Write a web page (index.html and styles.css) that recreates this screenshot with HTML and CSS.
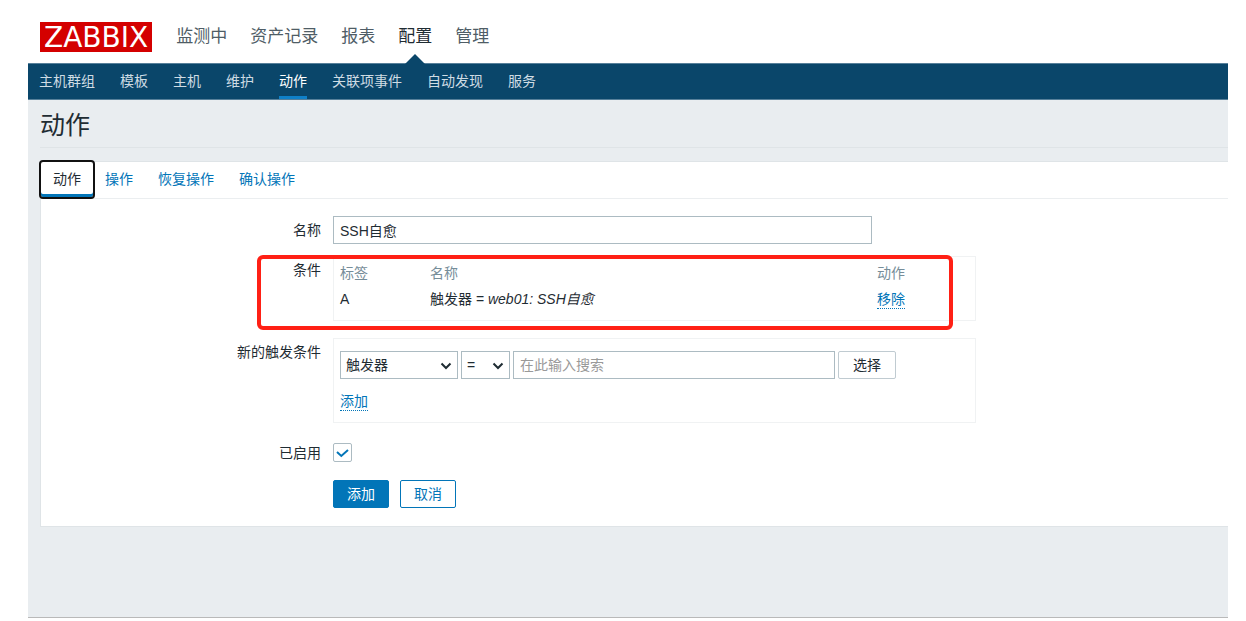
FILE: index.html
```html
<!DOCTYPE html>
<html lang="zh-CN">
<head>
<meta charset="utf-8">
<title>动作</title>
<link rel="stylesheet" href="styles.css">
</head>
<body>
<div class="page">
  <header class="header">
    <a class="logo" href="#">ZABBIX</a>
    <nav class="top-nav">
      <a href="#">监测中</a>
      <a href="#">资产记录</a>
      <a href="#">报表</a>
      <a class="selected" href="#">配置</a>
      <a href="#">管理</a>
    </nav>
  </header>
  <nav class="sub-nav">
    <a href="#">主机群组</a>
    <a href="#">模板</a>
    <a href="#">主机</a>
    <a href="#">维护</a>
    <a class="selected" href="#">动作</a>
    <a href="#">关联项事件</a>
    <a href="#">自动发现</a>
    <a href="#">服务</a>
  </nav>
  <main class="content">
    <h1 class="title">动作</h1>
    <form class="panel">
      <div class="tabs">
        <a class="tab active" href="#">动作</a>
        <a class="tab" href="#">操作</a>
        <a class="tab" href="#">恢复操作</a>
        <a class="tab" href="#">确认操作</a>
      </div>
      <div class="fields">
        <div class="row">
          <label class="label" for="name">名称</label>
          <input class="text-box name-box" id="name" type="text" value="SSH自愈">
        </div>
        <div class="row">
          <span class="label">条件</span>
          <div class="box conditions-box">
            <table class="conditions">
              <thead>
                <tr><th class="col-label">标签</th><th>名称</th><th class="col-action">动作</th></tr>
              </thead>
              <tbody>
                <tr><td>A</td><td>触发器 = <em>web01: SSH自愈</em></td><td><a class="dotted" href="#">移除</a></td></tr>
              </tbody>
            </table>
          </div>
          <div class="highlight"></div>
        </div>
        <div class="row row-new">
          <label class="label" for="type">新的触发条件</label>
          <div class="box new-box">
            <div class="controls">
              <span class="select-wrap type-select">
                <select id="type"><option>触发器</option></select>
                <svg class="chevron" viewBox="0 0 12 8"><path d="M1.500 1.500 6 6l4.500-4.500"/></svg>
              </span>
              <span class="select-wrap operator-select">
                <select aria-label="运算符"><option>=</option></select>
                <svg class="chevron" viewBox="0 0 12 8"><path d="M1.500 1.500 6 6l4.500-4.500"/></svg>
              </span>
              <input class="text-box search-box" type="text" placeholder="在此输入搜索" aria-label="触发器">
              <button class="button button-grey" type="button">选择</button>
            </div>
            <a class="dotted" href="#">添加</a>
          </div>
        </div>
        <div class="row row-enabled">
          <label class="label" for="enabled">已启用</label>
          <span class="check-wrap">
            <input id="enabled" type="checkbox" checked>
            <svg class="tick" viewBox="0 0 14 10"><path d="M1 3 5.300 7 12 1"/></svg>
          </span>
        </div>
        <div class="row row-actions">
          <div class="actions">
            <button class="button button-primary" type="button">添加</button>
            <button class="button" type="button">取消</button>
          </div>
        </div>
      </div>
    </form>
  </main>
</div>
</body>
</html>
```
FILE: styles.css
```css
* {
  box-sizing: border-box;
}

body {
  margin: 0;
  background: #fff;
  color: #1f2c33;
  font: 14px/20px "Liberation Sans", "Noto Sans CJK SC", sans-serif;
}

a {
  color: #0275b8;
  text-decoration: none;
}

input,
select,
button {
  margin: 0;
  color: inherit;
  font: inherit;
}

.page {
  display: flex;
  flex-direction: column;
  min-height: calc(100vh - 3px);
  margin: 0 18px 3px 28px;
}

.header {
  display: flex;
  align-items: center;
  gap: 24px;
  height: 63px;
  padding: 10px 12px 0;
}

.logo {
  padding: 2px 4px 0;
  background: #d40000;
  color: #fff;
  font: 28px/28px "DejaVu Sans", sans-serif;
}

.top-nav {
  display: flex;
  gap: 23px;
  font-size: 17px;
}

.top-nav a {
  position: relative;
  color: #4f5d66;
}

.top-nav .selected {
  color: #1f2c33;
}

.top-nav .selected::after {
  content: "";
  position: absolute;
  top: 27px;
  left: 50%;
  margin-left: -10px;
  border: solid transparent;
  border-width: 0 10px 10px;
  border-bottom-color: #0a466a;
}

.sub-nav {
  display: flex;
  gap: 25px;
  height: 37px;
  padding: 0 11px;
  border: solid #57809a;
  border-width: 1px 0;
  background: #0a466a;
}

.sub-nav a {
  height: 35px;
  border-bottom: 3px solid transparent;
  color: #cfdce4;
  line-height: 34px;
}

.sub-nav .selected {
  border-color: #0f80c8;
  color: #fff;
}

.content {
  flex: 1;
  padding: 0 0 24px 12px;
  border-bottom: 1px solid #b9b9b9;
  background: #e9edf0;
}

.title {
  margin: 0 0 13px;
  padding: 9px 0 6px;
  border-bottom: 1px solid #dfe4e7;
  font-size: 25px;
  font-weight: 400;
  line-height: 32px;
}

.panel {
  border: 1px solid #dfe4e7;
  border-right: 0;
  background: #fff;
}

.tabs {
  display: flex;
  gap: 25px;
  height: 37px;
  border-bottom: 1px solid #ebeef0;
}

.tab {
  line-height: 35px;
}

.tab.active {
  height: 39px;
  margin: -2px -15px 0 -2px;
  padding: 0 12px;
  border: 2px solid #111;
  border-radius: 4px;
  box-shadow: inset 0 -3px #0275b8;
  color: #1f2c33;
}

.fields {
  display: grid;
  gap: 12px;
  padding: 17px 0 18px;
}

.row {
  position: relative;
  display: grid;
  grid-template-columns: 280px minmax(0, 1fr);
  gap: 12px;
}

.label {
  padding-top: 4px;
  text-align: right;
}

.text-box {
  height: 28px;
  padding: 0 6px;
  border: 1px solid #acbbc2;
  border-radius: 0;
  background: #fff;
}

.text-box::placeholder {
  color: #999;
}

.name-box {
  width: 100%;
  max-width: 539px;
}

.box {
  max-width: 643px;
  border: 1px solid #f0f2f3;
}

.conditions-box {
  padding: 3px 6px 8px;
}

.conditions {
  width: 100%;
  border-collapse: collapse;
}

.conditions th,
.conditions td {
  height: 26px;
  padding: 0;
  font-weight: 400;
  text-align: left;
}

.conditions th {
  color: #768d99;
}

.col-label {
  width: 90px;
}

.col-action {
  width: 92px;
}

.dotted {
  display: inline-block;
  border-bottom: 1px dotted #0275b8;
  line-height: 18px;
}

.highlight {
  position: absolute;
  top: -1px;
  left: 216px;
  width: 696px;
  height: 75px;
  border: 4px solid #ff2015;
  border-radius: 6px;
  pointer-events: none;
}

.row-new {
  margin-top: 5px;
}

.new-box {
  padding: 12px 6px 11px;
}

.controls {
  display: flex;
  gap: 3px;
  margin-bottom: 12px;
}

.select-wrap {
  position: relative;
}

.select-wrap select {
  appearance: none;
  width: 100%;
  height: 28px;
  padding: 0 5px;
  border: 1px solid #acbbc2;
  border-radius: 0;
  background: #fff;
}

.type-select {
  width: 118px;
}

.operator-select {
  width: 49px;
}

.chevron {
  position: absolute;
  top: 11px;
  right: 6px;
  width: 12px;
  height: 8px;
  fill: none;
  stroke: #1f2c33;
  stroke-width: 2;
  pointer-events: none;
}

.search-box {
  width: 322px;
}

.button {
  height: 28px;
  padding: 0 14px;
  border: 1px solid #0275b8;
  border-radius: 2px;
  background: #fff;
  color: #0275b8;
}

.button-grey {
  border-color: #c0cbd1;
  color: #1f2c33;
}

.button-primary {
  background: #0275b8;
  color: #fff;
}

.row-enabled {
  margin-top: 8px;
}

.row-enabled .label {
  padding-top: 0;
}

.check-wrap {
  position: relative;
  height: 20px;
}

.check-wrap input {
  display: block;
  appearance: none;
  width: 19px;
  height: 19px;
  border: 1px solid #acbbc2;
  border-radius: 2px;
}

.tick {
  position: absolute;
  top: 6px;
  left: 3px;
  width: 14px;
  height: 10px;
  fill: none;
  stroke: #0275b8;
  stroke-width: 2;
  pointer-events: none;
}

.row-actions {
  margin-top: 5px;
}

.actions {
  display: flex;
  grid-column: 2;
  gap: 11px;
}

.actions .button {
  padding: 0 13px;
}
```
